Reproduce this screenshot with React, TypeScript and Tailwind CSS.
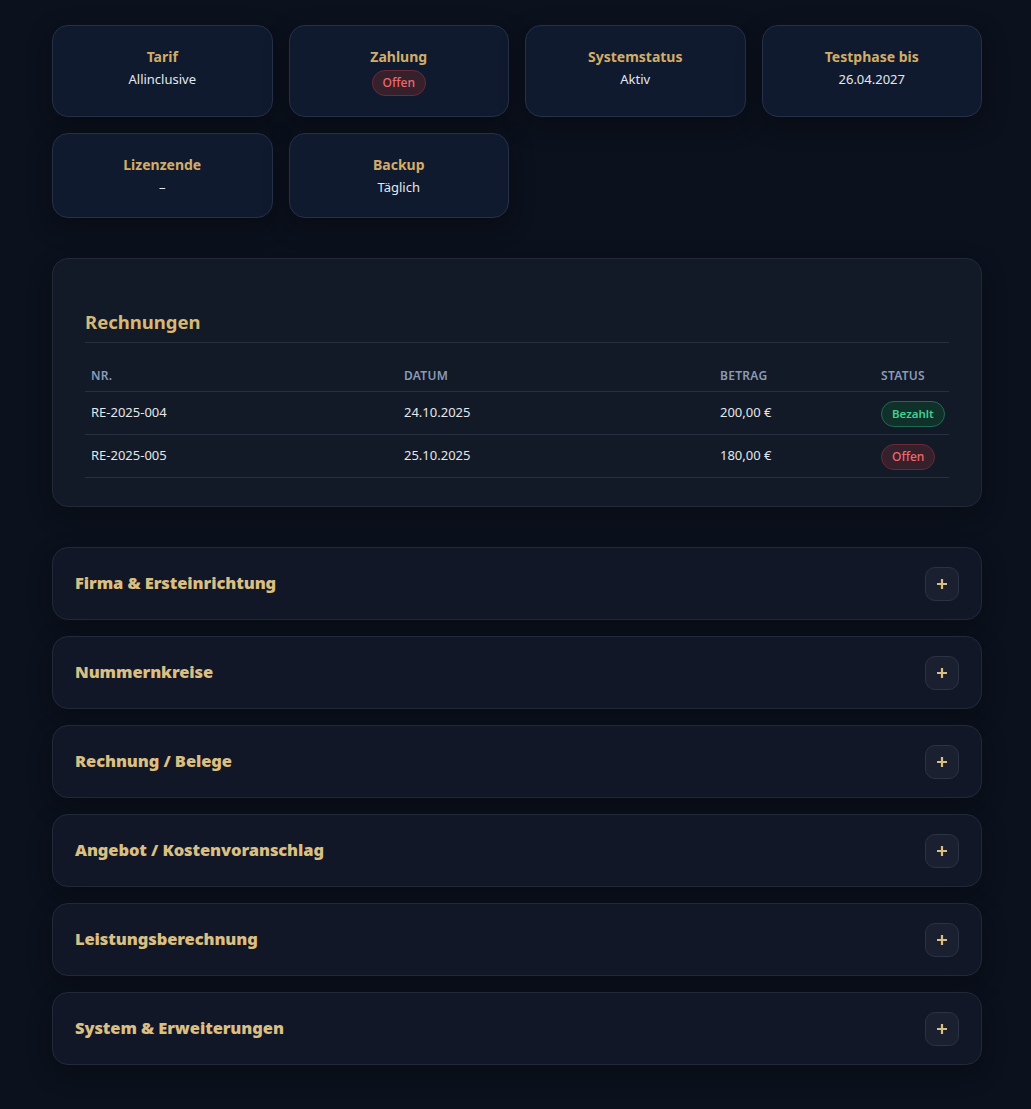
import React from 'react';

type Invoice = {
  nr: string;
  datum: string;
  betrag: string;
  status: 'Bezahlt' | 'Offen';
};

const invoices: Invoice[] = [
  { nr: 'RE-2025-004', datum: '24.10.2025', betrag: '200,00 €', status: 'Bezahlt' },
  { nr: 'RE-2025-005', datum: '25.10.2025', betrag: '180,00 €', status: 'Offen' },
];

const sections = [
  'Firma & Ersteinrichtung',
  'Nummernkreise',
  'Rechnung / Belege',
  'Angebot / Kostenvoranschlag',
  'Leistungsberechnung',
  'System & Erweiterungen',
];

const StatusBadge: React.FC<{ status: Invoice['status'] }> = ({ status }) => {
  if (status === 'Bezahlt') {
    return (
      <span className="inline-block rounded-full border border-[#1f6b52] bg-[#10302a] px-2.5 py-1 text-[11.5px] font-semibold leading-4 text-[#3fd194]">
        Bezahlt
      </span>
    );
  }
  return (
    <span className="inline-block rounded-full border border-[#6a2a36] bg-[#35202b] px-2.5 py-1 text-xs font-medium leading-4 text-[#f0686b]">
      Offen
    </span>
  );
};

const InfoCard: React.FC<{ title: string; children: React.ReactNode }> = ({ title, children }) => (
  <div className="flex flex-col items-center rounded-2xl border border-[#253049] bg-[#101a2e] px-4 py-5 text-center shadow-[0_8px_24px_rgba(0,0,0,0.35)]">
    <h4 className="text-sm font-bold leading-[22px] text-[#d3ad68]">{title}</h4>
    <div className="mt-px text-[13px] leading-5 text-[#e2e8f0]">{children}</div>
  </div>
);

const SectionRow: React.FC<{ title: string }> = ({ title }) => (
  <div className="flex h-[73px] items-center justify-between rounded-2xl border border-[#222a3a] bg-[#111726] px-[22px] shadow-[0_8px_24px_rgba(0,0,0,0.3)]">
    <h3 className="text-[16.5px] font-black tracking-[-0.1px] text-[#dbbf82]">{title}</h3>
    <button className="flex h-[34px] w-[34px] items-center justify-center rounded-[10px] border border-[#2a3344] bg-[#1a2030] text-[#dbbf82]">
      <svg width="12" height="12" viewBox="0 0 12 12" fill="none">
        <path d="M6 1v10M1 6h10" stroke="currentColor" strokeWidth="2.2" />
      </svg>
    </button>
  </div>
);

const th = 'px-1.5 pt-[17px] pb-[7px] text-xs font-semibold uppercase leading-4 tracking-wide text-[#8b9bb5]';
const td = 'px-1.5 text-[13px] text-[#e5e7eb]';

export default function App() {
  return (
    <div
      className="min-h-[1109px] bg-[#0b111d] pt-[25px] pb-10"
      style={{ fontFamily: '"Noto Sans", "Open Sans", Arial, sans-serif' }}
    >
      <div className="ml-[52px] w-[930px] space-y-10">
        <div className="grid grid-cols-4 gap-4">
          <InfoCard title="Tarif">Allinclusive</InfoCard>
          <InfoCard title="Zahlung">
            <span className="mt-px inline-block rounded-full border border-[#6a2a36] bg-[#35202b] px-2.5 py-1 text-xs font-medium leading-4 text-[#f0686b]">
              Offen
            </span>
          </InfoCard>
          <InfoCard title="Systemstatus">Aktiv</InfoCard>
          <InfoCard title="Testphase bis">26.04.2027</InfoCard>
          <InfoCard title="Lizenzende">–</InfoCard>
          <InfoCard title="Backup">Täglich</InfoCard>
        </div>

        <div className="rounded-2xl border border-[#222a3a] bg-[#121927] px-8 pt-[49px] pb-7 shadow-[0_8px_24px_rgba(0,0,0,0.3)]">
          <h2 className="border-b border-[#273041] pb-1.5 text-[18.5px] font-bold leading-7 text-[#d7b975]">Rechnungen</h2>
          <table className="mt-2 w-full table-fixed border-collapse text-left">
            <colgroup>
              <col className="w-[313px]" />
              <col className="w-[316px]" />
              <col className="w-[161px]" />
              <col />
            </colgroup>
            <thead>
              <tr className="border-b border-[#273041]">
                <th className={th}>Nr.</th>
                <th className={th}>Datum</th>
                <th className={th}>Betrag</th>
                <th className={th}>Status</th>
              </tr>
            </thead>
            <tbody>
              {invoices.map((inv) => (
                <tr key={inv.nr} className="h-[43px] border-b border-[#273041]">
                  <td className={td}>{inv.nr}</td>
                  <td className={td}>{inv.datum}</td>
                  <td className={td}>{inv.betrag}</td>
                  <td className="px-1.5">
                    <StatusBadge status={inv.status} />
                  </td>
                </tr>
              ))}
            </tbody>
          </table>
        </div>

        <div className="space-y-4">
          {sections.map((s) => (
            <SectionRow key={s} title={s} />
          ))}
        </div>
      </div>
    </div>
  );
}
